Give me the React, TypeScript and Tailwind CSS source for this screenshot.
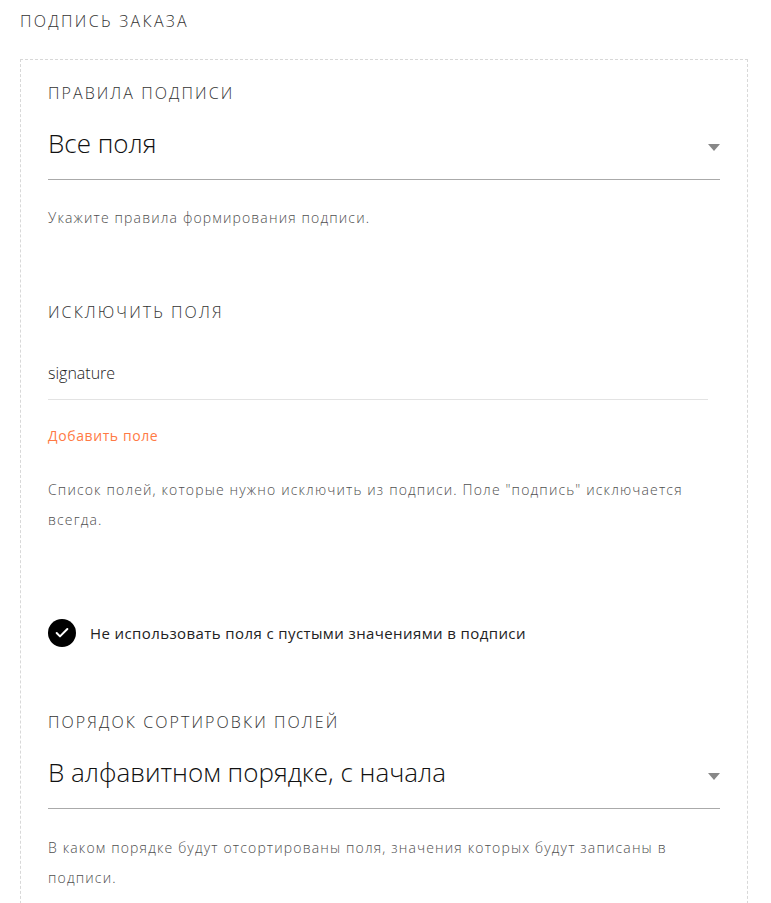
import { Check } from "lucide-react";

function SectionLabel({ children }: { children: React.ReactNode }) {
  return (
    <div className="text-[16px] leading-5 uppercase tracking-[0.13em] text-[#333] font-light">
      {children}
    </div>
  );
}

function SelectField({ value }: { value: string }) {
  return (
    <div className="flex items-end justify-between border-b border-[#aaa] pb-[20px]">
      <span className="text-[26px] leading-8 text-[#111] font-light">{value}</span>
      <span className="mb-[8px] w-0 h-0 border-l-[6px] border-r-[6px] border-t-[7px] border-l-transparent border-r-transparent border-t-[#888]" />
    </div>
  );
}

function Hint({ children }: { children: React.ReactNode }) {
  return (
    <p className="text-[14px] leading-[30px] tracking-[1.15px] text-[#4f4f4f] font-light">
      {children}
    </p>
  );
}

export default function App() {
  return (
    <div className="bg-white min-h-screen font-['Open_Sans',sans-serif] px-5 pt-[11px]">
      <h2 className="text-[16px] leading-5 uppercase tracking-[0.145em] text-[#333] font-light">
        Подпись заказа
      </h2>

      <div className="mt-[28px] border border-dashed border-[#d8d8d8] px-[27px] pt-[23px] pb-10 w-[728px]">
        <SectionLabel>Правила подписи</SectionLabel>
        <div className="mt-[24px]">
          <SelectField value="Все поля" />
        </div>
        <div className="mt-[23px]">
          <Hint>Укажите правила формирования подписи.</Hint>
        </div>

        <div className="mt-[69px]">
          <SectionLabel>Исключить поля</SectionLabel>
        </div>
        <div className="mt-[41px] mr-3 border-b border-[#e3e3e3] pb-[16px] text-[16px] leading-5 text-[#222] font-light">
          signature
        </div>
        <button className="mt-[26px] block text-[14px] leading-5 tracking-[0.6px] text-[#ff7a45]">
          Добавить поле
        </button>
        <div className="mt-[29px] pr-8">
          <Hint>
            Список полей, которые нужно исключить из подписи. Поле "подпись" исключается
            всегда.
          </Hint>
        </div>

        <label className="mt-[84px] flex items-center gap-[14px]">
          <span className="flex h-7 w-7 items-center justify-center rounded-full bg-black">
            <Check className="h-4 w-4 text-white" strokeWidth={3} />
          </span>
          <span className="text-[15px] leading-5 tracking-[0.4px] text-[#222]">
            Не использовать поля с пустыми значениями в подписи
          </span>
        </label>

        <div className="mt-[65px]">
          <SectionLabel>Порядок сортировки полей</SectionLabel>
        </div>
        <div className="mt-[24px]">
          <SelectField value="В алфавитном порядке, с начала" />
        </div>
        <div className="mt-[24px] pr-8">
          <Hint>
            В каком порядке будут отсортированы поля, значения которых будут записаны в
            подписи.
          </Hint>
        </div>
      </div>
    </div>
  );
}
